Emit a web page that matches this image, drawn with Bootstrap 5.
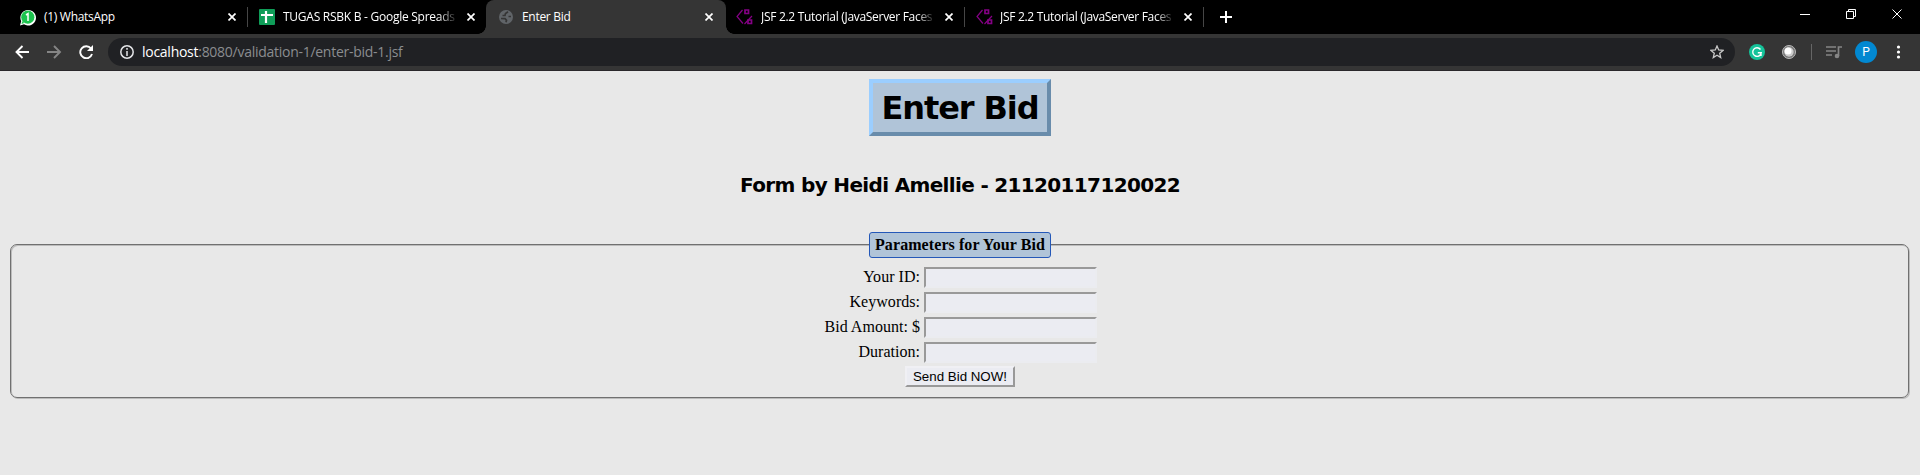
<!DOCTYPE html>
<html lang="en">
<head>
<meta charset="utf-8">
<title>Enter Bid</title>
<link rel="stylesheet" href="https://cdn.jsdelivr.net/npm/bootstrap@5.3.0/dist/css/bootstrap.min.css">
<style>
body{background:#e8e8e8;height:475px;overflow:hidden;font-family:"Liberation Serif",serif;font-size:16px;color:#000}
svg{display:block;flex:none}
.strip{height:34px;background:#000;font:12px/34px "Open Sans",sans-serif;color:#fff}
.tab{height:34px;position:relative}
.tab .ttl{white-space:nowrap;flex:none;letter-spacing:-.3px}
.fade-end{-webkit-mask-image:linear-gradient(to right,#000 calc(100% - 20px),transparent);mask-image:linear-gradient(to right,#000 calc(100% - 20px),transparent)}
.tab-on{background:#353535;border-radius:8px 8px 0 0}
.tab-on::before,.tab-on::after{content:"";position:absolute;bottom:0;width:8px;height:8px}
.tab-on::before{left:-8px;background:radial-gradient(circle at 0 0,transparent 7.5px,#353535 8px)}
.tab-on::after{right:-8px;background:radial-gradient(circle at 100% 0,transparent 7.5px,#353535 8px)}
.sep{width:1px;height:20px;background:#464646;flex:none}
.bar{height:37px;background:#353535;border-bottom:1px solid #29272b;padding-bottom:1px}
.omni{height:28px;width:1627px;border-radius:14px;background:#202124;margin-left:15px;font:14px/28px "Open Sans",sans-serif;color:#8b8d90}
.omni .url{letter-spacing:-.27px}
.omni b{font-weight:400;color:#fff}
.heading-box{width:182px;height:57px;margin-top:8px;border:4px solid;border-color:#9bceff #698cab #698cab #9bceff;background:#b0c4d8;font:bold 32px/51px "DejaVu Sans",sans-serif;letter-spacing:-1.1px;white-space:nowrap}
.byline{font:bold 20px/24px "DejaVu Sans",sans-serif;letter-spacing:-.66px;margin-top:37px;white-space:nowrap}
.bid-form{margin:35px 10px 0;height:167px;position:relative}
.frame{position:absolute;left:0;right:1px;top:12px;bottom:1px;border:1px solid #707070;border-radius:7px;box-shadow:1px 1px #bcbcbc,inset 1px 1px #bcbcbc}
.caption{position:relative;width:182px;height:26px;border:1px solid #2458b8;border-radius:3px;background:#b0c4d8;font-weight:bold;line-height:24px;letter-spacing:.08px;white-space:nowrap}
.line{height:25px}
.line label{width:120px;text-align:right;line-height:23px;padding-bottom:2px;letter-spacing:.03px;white-space:nowrap}
.line input{width:173px;height:21px;border:2px solid;border-color:#999 #ebecf0 #ebecf0 #999;background:#ebecf2;padding:0;margin-left:4px}
.send{position:relative;width:110px;height:21px;margin-top:1px;border:2px solid;border-color:#f0f0f4 #999 #999 #f0f0f4;background:#ebecf2;padding:0;font:13.33px/17px "Liberation Sans",sans-serif;color:#000;white-space:nowrap}
</style>
<script src="https://cdn.jsdelivr.net/npm/bootstrap@5.3.0/dist/js/bootstrap.bundle.min.js"></script>
</head>
<body>
<svg width="0" height="0" class="position-absolute">
<symbol id="x" viewBox="0 0 8 8"><path d="M.5.5l7 7M7.5.5l-7 7" stroke="#fff" stroke-width="1.7"/></symbol>
<symbol id="jsf" viewBox="0 0 17 16"><g fill="none" stroke="#850085"><path d="M6.500 1L1 7.500l6 7M16 7l-7.500 8" stroke-width="1.200"/><path d="M9 1h3.500v3.500H9zM12 11h3.500v3.500H12z" stroke-width="1.700"/></g></symbol>
</svg>
<header>
<div class="strip d-flex">
 <div class="tab d-flex align-items-center" style="width:247px;padding-left:19px">
  <svg width="17" height="17" viewBox="0 0 17 17"><path d="M1 16.500l1.200-4.300A7.800 7.800 0 1 1 5 15.300z" fill="#fff"/><circle cx="8.800" cy="8.200" r="6.600" fill="#1cc34e"/><path d="M2.500 15l.8-3 2 2z" fill="#1cc34e"/><path d="M7 6l2-1.300v7.300" fill="none" stroke="#fff" stroke-width="1.500"/></svg>
  <span class="ttl ms-2" style="width:184px">(1) WhatsApp</span><svg width="8" height="8"><use href="#x"/></svg>
 </div>
 <div class="sep align-self-center"></div>
 <div class="tab d-flex align-items-center" style="width:238px;padding-left:11px">
  <svg width="16" height="16"><rect width="16" height="16" rx="1" fill="#0f9d58"/><path d="M7 2v12M2 6h12" stroke="#fff" stroke-width="2.200"/></svg>
  <span class="ttl fade-end" style="width:175px;margin:0 9px 0 8px;letter-spacing:-.26px">TUGAS RSBK B - Google Spreads</span><svg width="8" height="8"><use href="#x"/></svg>
 </div>
 <div class="tab tab-on d-flex align-items-center" style="width:240px;padding-left:13px">
  <svg width="14" height="14" viewBox="0 0 14 14"><circle cx="7" cy="7" r="7" fill="#606468"/><path d="M9 1.800L6.500 3.500 6 5.500H3.500M12 6.500H9.500M2 8.500l4 .2 1.500 1.500-.5 2" fill="none" stroke="#353535" stroke-width="1.700"/></svg>
  <span class="ttl" style="width:183px;margin-left:9px">Enter Bid</span><svg width="8" height="8"><use href="#x"/></svg>
 </div>
 <div class="tab d-flex align-items-center" style="width:238px;padding-left:10px">
  <svg width="17" height="16"><use href="#jsf"/></svg>
  <span class="ttl fade-end" style="width:175px;margin:0 9px 0 8px">JSF 2.2 Tutorial (JavaServer Faces</span><svg width="8" height="8"><use href="#x"/></svg>
 </div>
 <div class="sep align-self-center"></div>
 <div class="tab d-flex align-items-center" style="width:238px;padding-left:11px">
  <svg width="17" height="16"><use href="#jsf"/></svg>
  <span class="ttl fade-end" style="width:175px;margin:0 9px 0 7px">JSF 2.2 Tutorial (JavaServer Faces</span><svg width="8" height="8"><use href="#x"/></svg>
 </div>
 <div class="sep align-self-center"></div>
 <svg width="12" height="34" style="margin-left:16px"><path d="M6 11v12M0 17h12" stroke="#fff" stroke-width="2"/></svg>
 <svg class="ms-auto" width="120" height="34" viewBox="0 0 120 34" fill="none" stroke="#fff"><path d="M0 14.500h10M46.500 11.500h7v7h-7zM48.500 11V9.500h7v7H54M92.500 9.500l9 9M101.500 9.500l-9 9"/></svg>
</div>
<div class="bar d-flex align-items-center" style="padding-left:15px">
 <svg width="78" height="14" viewBox="0 0 78 14" fill="none" stroke-width="1.900"><path d="M14 7H1.500M7.500 1l-6 6 6 6" stroke="#fff"/><path d="M32 7h12.500M39 1l6 6-6 6" stroke="#858585"/><path d="M76 3.500A6 6 0 1 0 77 9" stroke="#fff"/><path d="M78 0v6h-6z" fill="#fff"/></svg>
 <div class="omni d-flex align-items-center ps-2"><svg class="ms-1" width="14" height="14" fill="none" stroke="#e4e5e8" stroke-width="1.500"><circle cx="7" cy="7" r="6.200"/><path d="M7 6v5M7 3v1.700"/></svg><span class="url text-nowrap" style="margin-left:8px"><b>localhost</b>:8080/validation-1/enter-bid-1.jsf</span>
 <svg class="ms-auto" style="margin-right:11px" width="14" height="14" viewBox="0 0 14 14"><path d="M7 1l1.700 4 4.300.4-3.300 2.800 1 4.300L7 10.200l-3.700 2.300 1-4.300L1 5.400 5.300 5z" fill="none" stroke="#c8c8c8" stroke-width="1.300"/></svg></div>
 <svg width="170" height="34" viewBox="1735 35 170 34"><circle cx="1757" cy="52" r="8" fill="#15c39a"/><path d="M1760.500 49.500a4.300 4.300 0 1 0 .8 3.200h-3.500M1761 53v3" fill="none" stroke="#fff" stroke-width="1.400"/><circle cx="1789" cy="52" r="6.500" fill="#777" stroke="#bbb"/><circle cx="1789" cy="52" r="4.700" fill="#ccc"/><circle cx="1788" cy="51" r="3.500" fill="#fff"/><path d="M1811.500 44v16" stroke="#666"/><path d="M1826 47h10M1826 51h10M1826 55h6M1838.500 56v-9h3.500" fill="none" stroke="#858585" stroke-width="1.700"/><circle cx="1837" cy="56" r="2.300" fill="#858585"/><circle cx="1866" cy="52" r="11" fill="#0288d1"/><text x="1866" y="56.300" text-anchor="middle" font-family="Roboto,sans-serif" font-size="12" fill="#fff">P</text><g fill="#fff"><circle cx="1898.500" cy="47" r="1.600"/><circle cx="1898.500" cy="52" r="1.600"/><circle cx="1898.500" cy="57" r="1.600"/></g></svg>
</div>
</header>
<main>
<h1 class="heading-box mx-auto mb-0 text-center">Enter Bid</h1>
<h2 class="byline mb-0 text-center">Form by Heidi Amellie - 21120117120022</h2>
<form class="bid-form">
 <div class="frame"></div>
 <div class="caption mx-auto text-center">Parameters for Your Bid</div>
 <div style="margin:7px 0 0 790px">
  <div class="line d-flex align-items-center"><label for="a">Your ID:</label><input id="a"></div>
  <div class="line d-flex align-items-center"><label for="b">Keywords:</label><input id="b"></div>
  <div class="line d-flex align-items-center"><label for="c">Bid Amount: $</label><input id="c"></div>
  <div class="line d-flex align-items-center"><label for="d">Duration:</label><input id="d"></div>
 </div>
 <button type="button" class="send d-block mx-auto">Send Bid NOW!</button>
</form>
</main>
</body>
</html>
